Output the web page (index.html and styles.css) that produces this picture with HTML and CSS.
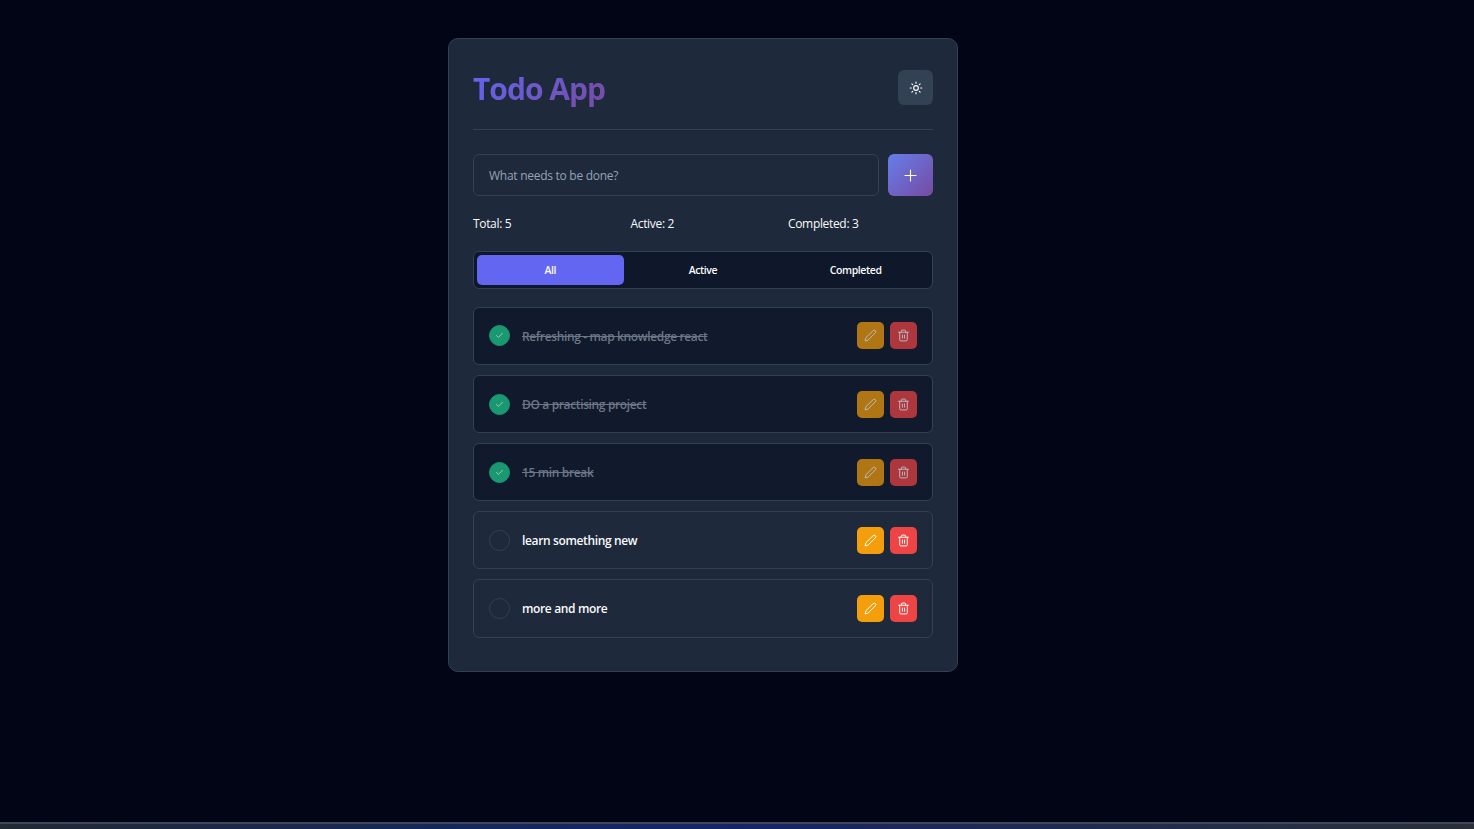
FILE: index.html
```html
<!DOCTYPE html>
<html lang="en">

<head>
  <meta charset="UTF-8">
  <title>Todo App</title>
  <link rel="stylesheet" href="styles.css">
</head>

<body>

  <main class="page">
    <section class="card">

      <header class="header">
        <h1 class="title">Todo App</h1>
        <button class="theme-btn" aria-label="Toggle theme">
          <svg class="icon-sun" viewBox="0 0 24 24"><circle cx="12" cy="12" r="4"/><path d="M12 2v2M12 20v2M4.93 4.93l1.41 1.41M17.66 17.66l1.41 1.41M2 12h2M20 12h2M6.34 17.66l-1.41 1.41M19.07 4.93l-1.41 1.41"/></svg>
        </button>
      </header>

      <form class="add-form">
        <input class="add-input" type="text" placeholder="What needs to be done?">
        <button class="add-btn" type="button" aria-label="Add">
          <svg class="icon-plus" viewBox="0 0 24 24"><path d="M12 5v14M5 12h14"/></svg>
        </button>
      </form>

      <div class="stats">
        <span>Total: 5</span>
        <span>Active: 2</span>
        <span>Completed: 3</span>
      </div>

      <div class="filters">
        <button class="filter active">All</button>
        <button class="filter">Active</button>
        <button class="filter">Completed</button>
      </div>

      <ul class="todos">
        <li class="todo done">
          <span class="check"><svg viewBox="0 0 24 24"><path d="M20 6 9 17l-5-5"/></svg></span>
          <span class="todo-text">Refreshing - map knowledge react</span>
          <button class="action edit" aria-label="Edit"><svg viewBox="0 0 24 24"><path d="M17 3a2.8 2.8 0 1 1 4 4L7.5 20.5 2 22l1.5-5.5z"/></svg></button>
          <button class="action delete" aria-label="Delete"><svg viewBox="0 0 24 24"><path d="M3 6h18M19 6v14a2 2 0 0 1-2 2H7a2 2 0 0 1-2-2V6M8 6V4a2 2 0 0 1 2-2h4a2 2 0 0 1 2 2v2M10 11v6M14 11v6"/></svg></button>
        </li>
        <li class="todo done">
          <span class="check"><svg viewBox="0 0 24 24"><path d="M20 6 9 17l-5-5"/></svg></span>
          <span class="todo-text">DO a practising project</span>
          <button class="action edit" aria-label="Edit"><svg viewBox="0 0 24 24"><path d="M17 3a2.8 2.8 0 1 1 4 4L7.5 20.5 2 22l1.5-5.5z"/></svg></button>
          <button class="action delete" aria-label="Delete"><svg viewBox="0 0 24 24"><path d="M3 6h18M19 6v14a2 2 0 0 1-2 2H7a2 2 0 0 1-2-2V6M8 6V4a2 2 0 0 1 2-2h4a2 2 0 0 1 2 2v2M10 11v6M14 11v6"/></svg></button>
        </li>
        <li class="todo done">
          <span class="check"><svg viewBox="0 0 24 24"><path d="M20 6 9 17l-5-5"/></svg></span>
          <span class="todo-text">15 min break</span>
          <button class="action edit" aria-label="Edit"><svg viewBox="0 0 24 24"><path d="M17 3a2.8 2.8 0 1 1 4 4L7.5 20.5 2 22l1.5-5.5z"/></svg></button>
          <button class="action delete" aria-label="Delete"><svg viewBox="0 0 24 24"><path d="M3 6h18M19 6v14a2 2 0 0 1-2 2H7a2 2 0 0 1-2-2V6M8 6V4a2 2 0 0 1 2-2h4a2 2 0 0 1 2 2v2M10 11v6M14 11v6"/></svg></button>
        </li>
        <li class="todo">
          <span class="check"></span>
          <span class="todo-text">learn something new</span>
          <button class="action edit" aria-label="Edit"><svg viewBox="0 0 24 24"><path d="M17 3a2.8 2.8 0 1 1 4 4L7.5 20.5 2 22l1.5-5.5z"/></svg></button>
          <button class="action delete" aria-label="Delete"><svg viewBox="0 0 24 24"><path d="M3 6h18M19 6v14a2 2 0 0 1-2 2H7a2 2 0 0 1-2-2V6M8 6V4a2 2 0 0 1 2-2h4a2 2 0 0 1 2 2v2M10 11v6M14 11v6"/></svg></button>
        </li>
        <li class="todo">
          <span class="check"></span>
          <span class="todo-text">more and more</span>
          <button class="action edit" aria-label="Edit"><svg viewBox="0 0 24 24"><path d="M17 3a2.8 2.8 0 1 1 4 4L7.5 20.5 2 22l1.5-5.5z"/></svg></button>
          <button class="action delete" aria-label="Delete"><svg viewBox="0 0 24 24"><path d="M3 6h18M19 6v14a2 2 0 0 1-2 2H7a2 2 0 0 1-2-2V6M8 6V4a2 2 0 0 1 2-2h4a2 2 0 0 1 2 2v2M10 11v6M14 11v6"/></svg></button>
        </li>
      </ul>

    </section>
  </main>

  <div class="taskbar"></div>

</body>

</html>
```

FILE: styles.css
```css
* {
  box-sizing: border-box;
}

html, body {
  height: 100%;
}

body {
  margin: 0;
  display: flex;
  flex-direction: column;
  overflow: hidden;
  background-color: #010516;
  color: #f8fafc;
  font-family: 'Open Sans', 'Noto Sans', sans-serif;
}

button {
  border: none;
  padding: 0;
  font-family: inherit;
  cursor: pointer;
}

svg {
  fill: none;
  stroke: currentColor;
  stroke-width: 2;
  stroke-linecap: round;
  stroke-linejoin: round;
}

.page {
  flex: 1;
  padding: 38px 68px 0 0;
  display: flex;
  justify-content: center;
  align-items: flex-start;
}

.card {
  width: 510px;
  height: 634px;
  padding: 24px;
  background-color: #1e293b;
  border: 1px solid #334155;
  border-radius: 10px;
}

.header {
  display: flex;
  justify-content: space-between;
  align-items: center;
  height: 67px;
  padding-bottom: 17px;
  border-bottom: 1px solid #334155;
  margin-bottom: 24px;
}

.title {
  margin: 1px 0 0;
  font-size: 30px;
  font-weight: 700;
  line-height: 49px;
  letter-spacing: -1px;
  background: linear-gradient(135deg, #6366f1, #764ba2);
  -webkit-background-clip: text;
  background-clip: text;
  color: transparent;
}

.theme-btn {
  width: 35px;
  height: 35px;
  display: flex;
  align-items: center;
  justify-content: center;
  background-color: #334155;
  border-radius: 6px;
  color: #f8fafc;
}

.icon-sun {
  width: 14px;
  height: 14px;
}

.add-form {
  display: flex;
  justify-content: space-between;
  margin-bottom: 18px;
}

.add-input {
  width: 406px;
  height: 42px;
  padding: 0 15px;
  background-color: #1e293b;
  border: 1px solid #334155;
  border-radius: 6px;
  color: #f8fafc;
  font-family: inherit;
  font-size: 12px;
  letter-spacing: -0.27px;
  outline: none;
}

.add-input::placeholder {
  color: #94a3b8;
  opacity: 1;
}

.add-btn {
  width: 45px;
  height: 42px;
  display: flex;
  align-items: center;
  justify-content: center;
  background: linear-gradient(135deg, #667eea, #764ba2);
  border-radius: 6px;
  color: #fff;
}

.icon-plus {
  width: 19px;
  height: 19px;
  stroke-width: 1.4;
}

.stats {
  display: grid;
  grid-template-columns: 157.5px 157.5px 1fr;
  height: 20px;
  line-height: 20px;
  margin-bottom: 17px;
  font-size: 12px;
  letter-spacing: -0.33px;
}

.filters {
  display: grid;
  grid-template-columns: repeat(3, 1fr);
  gap: 6px;
  height: 38px;
  padding: 3px;
  margin-bottom: 17.75px;
  background-color: #0f172a;
  border: 1px solid #334155;
  border-radius: 6px;
}

.filter {
  background: transparent;
  border-radius: 5px;
  color: #f8fafc;
  font-size: 10.5px;
  font-weight: 600;
  letter-spacing: -0.4px;
}

.filter.active {
  background-color: #6366f1;
}

.todos {
  list-style: none;
  margin: 0;
  padding: 0;
  display: flex;
  flex-direction: column;
  gap: 9.85px;
}

.todo {
  height: 58.3px;
  padding: 0 15px;
  display: flex;
  align-items: center;
  gap: 12px;
  background-color: #1e293b;
  border: 1px solid #334155;
  border-radius: 6px;
}

.check {
  width: 21px;
  height: 21px;
  flex-shrink: 0;
  display: flex;
  align-items: center;
  justify-content: center;
  border: 1px solid #334155;
  border-radius: 50%;
  color: #fff;
}

.check svg {
  width: 9px;
  height: 9px;
}

.todo-text {
  flex: 1;
  font-size: 12px;
  line-height: 16px;
  padding-top: 2px;
  font-weight: 600;
  letter-spacing: -0.36px;
}

.action {
  width: 27px;
  height: 27px;
  display: flex;
  align-items: center;
  justify-content: center;
  border-radius: 5px;
  color: #fff;
}

.action svg {
  width: 13px;
  height: 13px;
  stroke-width: 1.8;
}

.action.edit {
  background-color: #f59e0b;
}

.action.delete {
  background-color: #ef4444;
  margin-left: -6px;
}

.todo.done {
  background-color: #111a2c;
}

.todo.done .check {
  background-color: #1a9872;
  border-color: #1a9872;
  color: #b9dccf;
}

.todo.done .todo-text {
  color: #6b7686;
  text-decoration: line-through;
}

.todo.done .action {
  opacity: 0.7;
}

.taskbar {
  height: 7px;
  flex-shrink: 0;
  background: linear-gradient(90deg, #222a33, #14275a 30%, #162466 50%, #1e2c4e 75%, #2a2f38);
  border-top: 2px solid #3f4759;
}
```
